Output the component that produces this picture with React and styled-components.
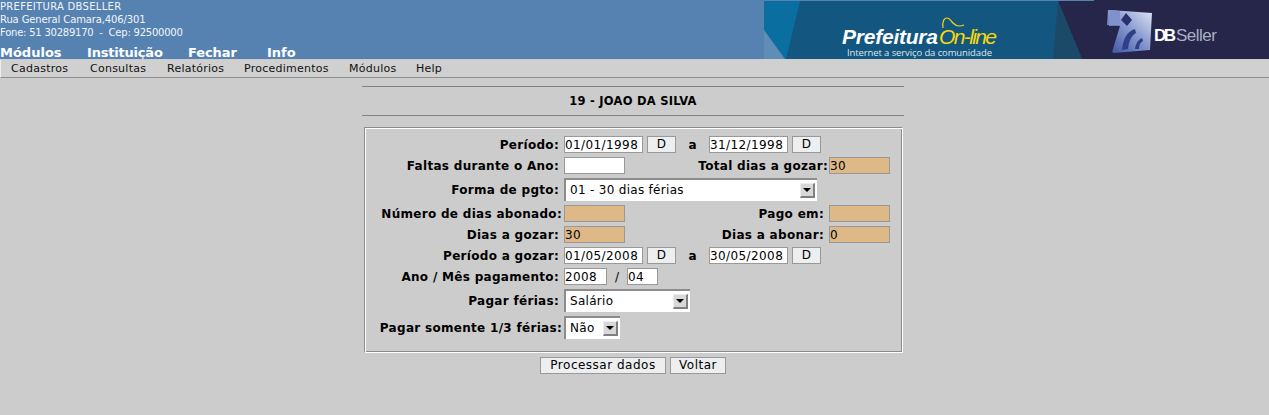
import React from "react";
import styled, { createGlobalStyle } from "styled-components";

const Global = createGlobalStyle`
  html, body { margin: 0; padding: 0; background: #cccccc; }
  body { font-family: "DejaVu Sans", Verdana, sans-serif; height: 415px; overflow: hidden; }
`;
const Header = styled.header`
  display: flex; justify-content: space-between; height: 59px; background: #5682b2; overflow: hidden;
`;
const Brand = styled.div`display: flex; flex-direction: column; color: #fff;`;
const AddressLine = styled.div`
  font-size: 10px; line-height: 13px; height: 13px; white-space: pre; color: #f2f5f9; letter-spacing: ${p => p.$ls}px;
`;
const TopNav = styled.nav`display: flex; margin-top: 7px;`;
const TopLink = styled.a`
  font-size: 13px; font-weight: bold; line-height: 13px; color: #fff; width: ${p => p.$w}px; white-space: nowrap; letter-spacing: ${p => p.$ls}px;
`;
const Banner = styled.svg`display: block; flex: none;`;
const MenuBar = styled.div`
  display: flex; height: 17px; margin-top: 1px; padding-left: 10px; background: #d0d0d0; border-bottom: 1px solid #8e8e8e;
  border-left: 1px solid #eee;
`;
const MenuItem = styled.span`
  font-size: 11px; line-height: 17px; color: #111; width: ${p => p.$w}px; white-space: nowrap; letter-spacing: 0.25px;
`;
const Page = styled.main`width: 542px; margin: 8px 0 0 362px; display: flex; flex-direction: column;`;
const Title = styled.h1`
  margin: 0; height: 27px; padding-top: 1px; border-top: 1px solid #808080; border-bottom: 1px solid #808080; font-size: 11.5px; font-weight: bold; line-height: 26px; text-align: center; color: #000; letter-spacing: 0.25px;
`;
const Panel = styled.section`
  margin: 11px 0 0 2px; width: 537px; height: 218px; border: 1px solid; border-color: #8c8c8c #fff #fff #8c8c8c;
  box-shadow: inset 1px 1px 0 #fff, inset -1px -1px 0 #8c8c8c;
  display: flex; flex-direction: column; padding-top: 6px; box-sizing: content-box;
`;
const Row = styled.div`display: flex; align-items: center; height: ${p => p.$h || 21}px;`;
const Label = styled.label`
  flex: none; width: ${p => p.$w || 194}px; padding: 1px ${p => p.$pr ?? 5}px 0 0; text-align: right; font-size: 12px; font-weight: bold; color: #000; white-space: nowrap; line-height: 17px; letter-spacing: 0.3px;
`;
const Field = styled.div`
  flex: none; box-sizing: border-box; width: ${p => p.$w}px; height: 17px; border: 1px solid #999; background: ${p => (p.$tan ? "#deb887" : "#fff")};
  font-size: 12px; line-height: 17px; padding-left: 0; color: #000; white-space: nowrap; overflow: hidden; letter-spacing: 0.4px;
`;
const SmallButton = styled.button`
  flex: none; box-sizing: border-box; width: ${p => p.$w}px; height: 17px; margin-left: ${p => p.$ml || 0}px; padding: 0; border: 1px solid #999; background: #eceef0; font-family: inherit; font-size: 12px; line-height: 15px; color: #000; letter-spacing: 0.5px;
`;
const Sep = styled.span`
  flex: none; width: ${p => p.$w}px; padding-top: 1px; text-align: center; font-size: 12px; font-weight: ${p => (p.$plain ? "normal" : "bold")}; color: #000;
`;
const SelectBox = styled.div`
  flex: none; box-sizing: border-box; width: ${p => p.$w}px; height: 23px; display: flex; align-items: center; justify-content: space-between; background: #fff; border-top: 2px solid #8c8c8c; border-left: 2px solid #8c8c8c; padding: 0 2px 1px 4px; font-size: 12px; color: #000; white-space: nowrap; letter-spacing: 0.3px;
`;
const Arrow = styled.span`
  flex: none; width: 15px; height: 15px; box-sizing: border-box; background: #d8d8d8; border-right: 2px solid #808080; border-bottom: 2px solid #808080; border-top: 1px solid #eee; border-left: 1px solid #eee; display: flex; align-items: center; justify-content: center;
  &::after { content: ""; width: 0; height: 0; border-left: 4px solid transparent; border-right: 4px solid transparent; border-top: 4px solid #000; }
`;
const Actions = styled.div`display: flex; gap: 4px; margin: 4px 0 0 178px;`;

const Select = ({ w, children }) => (
  <SelectBox $w={w}><span>{children}</span><Arrow /></SelectBox>
);

export default function App() {
  return (
    <>
      <Global />
      <Header>
        <Brand>
          <AddressLine $ls={0.3}>PREFEITURA DBSELLER</AddressLine>
          <AddressLine $ls={-0.12}>Rua General Camara,406/301</AddressLine>
          <AddressLine $ls={-0.23}>{"Fone: 51 30289170  -  Cep: 92500000"}</AddressLine>
          <TopNav>
            <TopLink $w={87} $ls={0}>Módulos</TopLink>
            <TopLink $w={101} $ls={-0.2}>Instituição</TopLink>
            <TopLink $w={79} $ls={-0.1}>Fechar</TopLink>
            <TopLink $w={40} $ls={0}>Info</TopLink>
          </TopNav>
        </Brand>
        <Banner width="505" height="59" viewBox="0 0 505 59">
          <defs>
            <linearGradient id="cube" x1="1" y1="0" x2="0.1" y2="1">
              <stop offset="0" stopColor="#dfe6f4" />
              <stop offset="0.45" stopColor="#8f9fd2" />
              <stop offset="1" stopColor="#3f55a4" />
            </linearGradient>
          </defs>
          <rect width="505" height="59" fill="#135680" />
          <rect y="0" width="330" height="1" fill="#5682b2" />
          <polygon points="0,1 36,1 22,59 0,59" fill="#0a6fa0" />
          <polygon points="0,30 21,59 0,59" fill="#5f8db5" />
          <polygon points="294,1 505,1 505,59 318,59" fill="#25264a" />
          <rect x="330" width="175" height="1" fill="#25264a" />
          <polygon points="294,1 318,59 289,59" fill="#1b4a68" />
          <text x="78" y="44" fontFamily="Liberation Sans" fontStyle="italic" fontWeight="bold" fontSize="21" fill="#fff" textLength="96">Prefeitura</text>
          <text x="175" y="44" fontFamily="Liberation Sans" fontStyle="italic" fontSize="21" fill="#f5d90a" textLength="58">On-line</text>
          <path d="M179 28c-1-6 1-10 4-10s4 3 6 5 4 3 6 3 3 0 5-1" fill="none" stroke="#f5d90a" strokeWidth="1.2" />
          <text x="83" y="56" fontFamily="Open Sans" fontSize="9.5" fill="#dde6ec" textLength="145">Internet a serviço da comunidade</text>
          <path d="M346 10l42 3-2 37-36 3-2-1 8-26-13-1 1-15z" fill="url(#cube)" />
          <path d="M346 10l10 1 0 14-11 1z" fill="#7f92cc" />
          <path d="M362 13l6 7-5 6-6-6z" fill="#2a2f73" />
          <path d="M358 50c1-12 6-19 13-21l1 4c-5 3-7 8-8 16z" fill="#2f4088" />
          <path d="M371 49c1-6 3-9 7-11l1 3c-3 2-4 4-4 8z" fill="#2f4088" />
          <text x="390" y="41" fontFamily="Liberation Sans" fontWeight="bold" fontSize="17" fill="#fff" textLength="22">DB</text>
          <text x="412" y="41" fontFamily="Liberation Sans" fontSize="17" fill="#aab0c2" textLength="41">Seller</text>
        </Banner>
      </Header>
      <MenuBar>
        <MenuItem $w={79}>Cadastros</MenuItem>
        <MenuItem $w={77}>Consultas</MenuItem>
        <MenuItem $w={77}>Relatórios</MenuItem>
        <MenuItem $w={105}>Procedimentos</MenuItem>
        <MenuItem $w={67}>Módulos</MenuItem>
        <MenuItem $w={40}>Help</MenuItem>
      </MenuBar>
      <Page>
        <Title>19 - JOAO DA SILVA</Title>
        <Panel>
          <Row>
            <Label>Período:</Label>
            <Field $w={79}>01/01/1998</Field>
            <SmallButton $w={29} $ml={4}>D</SmallButton>
            <Sep $w={33}>a</Sep>
            <Field $w={79}>31/12/1998</Field>
            <SmallButton $w={29} $ml={4}>D</SmallButton>
          </Row>
          <Row>
            <Label>Faltas durante o Ano:</Label>
            <Field $w={61} />
            <Label $w={203} $pr={1}>Total dias a gozar:</Label>
            <Field $w={61} $tan>30</Field>
          </Row>
          <Row $h={27}>
            <Label>Forma de pgto:</Label>
            <Select w={253}>01 - 30 dias férias</Select>
          </Row>
          <Row>
            <Label $pr={2} $w={197}>Número de dias abonado:</Label>
            <Field $w={61} $tan />
            <Label $w={199}>Pago em:</Label>
            <Field $w={61} $tan />
          </Row>
          <Row>
            <Label>Dias a gozar:</Label>
            <Field $w={61} $tan>30</Field>
            <Label $w={199}>Dias a abonar:</Label>
            <Field $w={61} $tan>0</Field>
          </Row>
          <Row>
            <Label>Período a gozar:</Label>
            <Field $w={79}>01/05/2008</Field>
            <SmallButton $w={29} $ml={4}>D</SmallButton>
            <Sep $w={33}>a</Sep>
            <Field $w={79}>30/05/2008</Field>
            <SmallButton $w={29} $ml={4}>D</SmallButton>
          </Row>
          <Row>
            <Label>Ano / Mês pagamento:</Label>
            <Field $w={43}>2008</Field>
            <Sep $w={20} $plain>/</Sep>
            <Field $w={31}>04</Field>
          </Row>
          <Row $h={27}>
            <Label>Pagar férias:</Label>
            <Select w={126}>Salário</Select>
          </Row>
          <Row $h={27}>
            <Label $pr={2} $w={197}>Pagar somente 1/3 férias:</Label>
            <Select w={56}>Não</Select>
          </Row>
        </Panel>
        <Actions>
          <SmallButton $w={126}>Processar dados</SmallButton>
          <SmallButton $w={56}>Voltar</SmallButton>
        </Actions>
      </Page>
    </>
  );
}
